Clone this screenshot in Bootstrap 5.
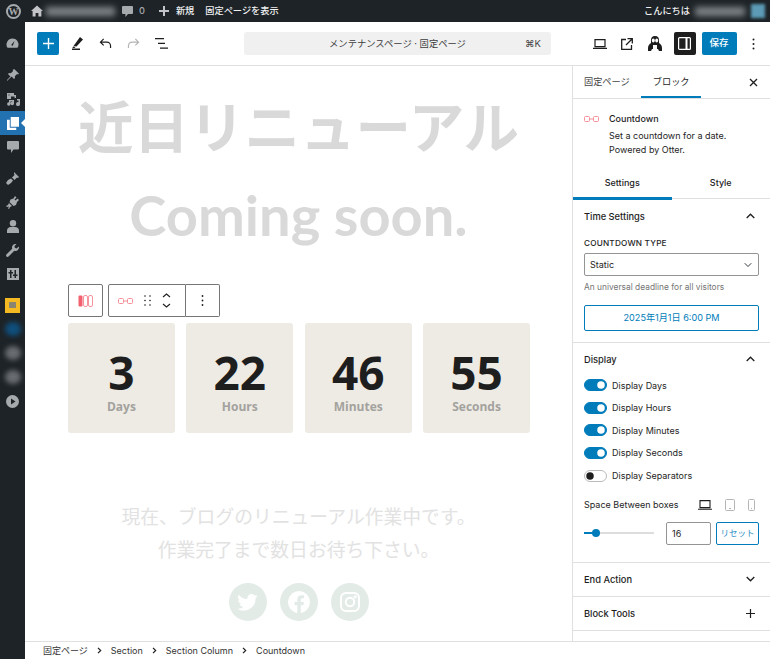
<!DOCTYPE html>
<html lang="ja">
<head>
    <meta charset="UTF-8">
    <title>Countdown</title>
    <link href="https://cdn.jsdelivr.net/npm/bootstrap@5.3.3/dist/css/bootstrap.min.css" rel="stylesheet">
    <script src="https://cdn.jsdelivr.net/npm/bootstrap@5.3.3/dist/js/bootstrap.bundle.min.js"></script>
    <meta name="viewport" content="width=device-width, initial-scale=1">
    <style>
        html, body { height: 100%; overflow: hidden; }
        body { font-family: Inter, "Noto Sans CJK JP", sans-serif; font-size: 9px; color: #1e1e1e; background: #fff; }
        svg { display: block; flex: none; }

        /* admin bar */
        .wp-adminbar { height: 22px; background: #1d2327; color: #f0f0f1; font-size: 9.2px; font-weight: 500; padding-left: 4px; flex: none; }
        .wp-logo { width: 15px; height: 15px; border: 2px solid #a7aaad; border-radius: 50%; color: #a7aaad; font: 700 10px/11px "Liberation Serif", serif; text-align: center; margin: 0 10px 0 2px; }
        .blur-name { height: 9px; background: #7f8488; filter: blur(3px); }
        .name-a { width: 69px; margin: 0 7px 0 3px; }
        .name-b { width: 50px; margin: 0 6px 0 5px; }
        .blur-avatar { width: 14px; height: 14px; background: #5c9ab5; filter: blur(1.5px); margin-right: 5px; }
        .bar-count { color: #a7aaad; margin: 0 14px 0 6px; }
        .bar-label { margin: 0 11px 0 7px; }

        /* wp menu */
        .wp-menu { width: 25px; background: #1d2327; padding-top: 9px; color: #a7aaad; flex: none; }
        .menu-row { height: 24px; position: relative; }
        .menu-row.is-current { background: #2271b1; color: #fff; }
        .menu-row.is-current::after { content: ""; position: absolute; right: 0; top: 8px; border: 4px solid transparent; border-right-color: #fff; }
        .menu-gap { margin-top: 8px; }
        .menu-gap-s { margin-top: 7px; }
        .plugin-tile { width: 15px; height: 15px; background: #f5b921; }
        .plugin-tile i { display: block; width: 7px; height: 6px; background: #8a8570; }
        .menu-blur { width: 16px; height: 14px; border-radius: 50%; filter: blur(2.5px); background: #696c70; }
        .menu-blur.tone-blue { background: #0f4f7d; }

        /* editor header */
        .editor-head { height: 44px; border-bottom: 1px solid #e0e0e0; padding-left: 12px; flex: none; }
        .editor-head > * { flex: none; }
        .inserter { width: 22px; height: 23px; background: #007cba; color: #fff; border-radius: 2px; }
        .tool-slot { width: 28px; }
        .cmd-bar { width: 307px; height: 23px; background: #f0f0f0; border-radius: 3px; color: #3c3c3c; font-size: 9.3px; margin-left: 69px; padding: 0 10px; position: relative; }
        .cmd-key { position: absolute; right: 10px; top: 5px; font-size: 9.5px; color: #444; }
        .right-tools { margin-left: 35px; }
        .view-slot { width: 27.5px; }
        .panel-toggle { width: 22px; height: 23px; background: #1e1e1e; color: #fff; border-radius: 2px; margin: 0 6px 0 5px; }
        .save-btn { width: 35px; height: 23px; background: #007cba; color: #fff; border-radius: 2px; font-size: 9.5px; font-weight: 500; }
        .kebab-slot { width: 34px; }

        /* canvas */
        .canvas-pane { width: 547px; flex: none; overflow: hidden; }
        .title-jp { font: 700 55.500px/1 "Noto Sans CJK JP", sans-serif; color: #d9d9d9; margin: 31px 0 0; text-align: center; }
        .title-en { font: 700 56px/1 Lato, sans-serif; color: #d9d9d9; margin: 34.500px 0 0; text-align: center; }
        .block-bar { height: 33px; margin: 41px 0 6px 43px; }
        .bar-box { height: 33px; border: 1px solid #757575; border-radius: 2px; background: #fff; }
        .box-one { width: 35px; margin-right: 5px; }
        .box-two { width: 78px; border-right: 1px solid #757575; padding-left: 9px; }
        .box-three { width: 34px; }
        .grip-slot { width: 29px; }
        .count-grid { margin: 0 42px 0 43px; gap: 11.5px; }
        .count-cell { flex: 1 1 0; height: 110px; background: #eeebe4; border-radius: 3px; text-align: center; font-family: "Open Sans", sans-serif; font-weight: 700; padding-top: 24px; }
        .count-num { font-size: 46px; line-height: 50px; color: #1e1e1e; }
        .count-lbl { font-size: 12px; line-height: 16px; color: #a3a29e; margin-top: 2px; }
        .notice-text { font: 400 18.800px/33px "Noto Sans CJK JP", sans-serif; color: #e2e2e2; text-align: center; margin: 66px 0 0; }
        .social-row { gap: 13px; margin-top: 18px; }
        .social-dot { width: 38px; height: 38px; border-radius: 50%; background: #e3ebe7; color: #fff; }

        /* settings sidebar */
        .side-pane { width: 198px; border-left: 1px solid #e0e0e0; flex: none; }
        .doc-tabs { height: 33px; border-bottom: 1px solid #e0e0e0; padding-left: 11px; position: relative; color: #444; font-size: 9.2px; }
        .doc-tab-on { position: relative; color: #1e1e1e; margin-left: 23px; }
        .doc-tab-on::after { content: ""; position: absolute; left: -12px; right: -11px; top: 21px; height: 2px; background: #007cba; }
        .close-x { position: absolute; right: 12px; top: 12px; }
        .block-card { height: 71px; padding: 13px 11px 0; gap: 10px; line-height: 14px; }
        .card-name { margin-bottom: 3px; font-weight: 500; }
        .sub-tabs { height: 29px; border-bottom: 1px solid #e0e0e0; font-weight: 500; }
        .sub-tab { width: 50%; text-align: center; height: 29px; line-height: 25px; position: relative; }
        .sub-tab.is-on::after { content: ""; position: absolute; left: 0; right: 0; bottom: -1px; height: 3px; background: #007cba; }
        .set-panel { border-bottom: 1px solid #e0e0e0; padding: 0 11px; }
        .set-head { height: 34px; font-weight: 500; font-size: 9.300px; padding-right: 4px; }
        .set-head.is-short { height: 31px; }
        .set-head span { position: relative; top: 1px; }
        .field-cap { font-size: 8.2px; font-weight: 500; letter-spacing: .2px; margin: 4px 0; line-height: 12px; }
        .form-select.tight { height: 23px; font-size: 9px; padding: 0 20px 0 5px; border-color: #949494; border-radius: 2px; background-size: 10px 8px; background-position: right 5px center; color: #1e1e1e; }
        .field-hint { color: #757575; font-size: 8.400px; margin: 5px 0 12px; line-height: 12px; }
        .btn.date-btn { display: block; width: 100%; height: 26px; padding: 0; font-size: 9.1px; border: 1px solid #007cba; border-radius: 2px; color: #007cba; background: #fff; margin-bottom: 11px; }
        .switch-row { height: 22.6px; gap: 5px; }
        .form-switch.tiny { padding: 0; margin: 0; min-height: 0; height: 12px; display: flex; }
        .form-switch.tiny .form-check-input { width: 23px; height: 12px; margin: 0; background-color: #007cba; border-color: #007cba; opacity: 1; }
        .form-switch.tiny .form-check-input:not(:checked) { background-color: #fff; border-color: #bbb; background-image: url("data:image/svg+xml,%3csvg xmlns='http://www.w3.org/2000/svg' viewBox='-4 -4 8 8'%3e%3ccircle r='3' fill='%231e1e1e'/%3e%3c/svg%3e"); }
        .space-head { margin-top: 6px; height: 24px; padding-right: 4px; }
        .device-set { gap: 13px; color: #1e1e1e; }
        .device-off { color: #b5b5b5; }
        .range-row { height: 23px; margin-top: 5px; margin-bottom: 17px; gap: 5px; }
        .range-track { width: 70px; height: 2px; background: #ddd; position: relative; margin-right: 7px; flex: none; }
        .range-fill { height: 2px; background: #007cba; }
        .range-knob { position: absolute; left: 8px; top: -3px; width: 8px; height: 8px; border-radius: 50%; background: #007cba; }
        .form-control.num-box { width: 45px; height: 23px; padding: 0 5px; font-size: 9px; border-color: #949494; border-radius: 2px; color: #1e1e1e; flex: none; }
        .btn.reset-btn { width: 43px; height: 23px; padding: 0; font-size: 8.5px; border: 1px solid #007cba; border-radius: 2px; color: #2c8fc7; background: #fff; flex: none; }
        .set-closed { height: 34px; font-weight: 500; font-size: 9.300px; padding-right: 15px; }

        /* footer */
        .crumbs { height: 18px; border-top: 1px solid #e0e0e0; padding-left: 18px; gap: 9px; color: #333; flex: none; background: #fff; }
    </style>
</head>
<body class="d-flex flex-column">

    <!-- admin bar -->
    <div class="wp-adminbar d-flex align-items-center">
        <div class="wp-logo">W</div>
        <svg width="12" height="12" viewBox="0 0 12 12" fill="#c3c4c7"><path d="M6 .5 0 6h1.600v5.500h3V8h2.800v3.500h3V6H12z"/></svg>
        <div class="blur-name name-a"></div>
        <svg width="11" height="11" viewBox="0 0 11 11" fill="#a7aaad"><path d="M1 0h9a1 1 0 0 1 1 1v6a1 1 0 0 1-1 1H6l-2.600 3V8H1a1 1 0 0 1-1-1V1a1 1 0 0 1 1-1z"/></svg>
        <span class="bar-count">0</span>
        <svg width="10" height="10" viewBox="0 0 10 10" fill="#c3c4c7"><path d="M4 0h2v4h4v2H6v4H4V6H0V4h4z"/></svg>
        <span class="bar-label">新規</span>
        <span>固定ページを表示</span>
        <span class="ms-auto">こんにちは</span>
        <div class="blur-name name-b"></div>
        <div class="blur-avatar"></div>
    </div>

    <div class="d-flex flex-grow-1 overflow-hidden">
        <!-- wp menu -->
        <nav class="wp-menu">
            <div class="menu-row d-flex align-items-center justify-content-center"><svg width="13" height="13" viewBox="0 0 13 13" fill="currentColor"><path d="M6.500 1.500a6 6 0 0 0-5 9.300h10a6 6 0 0 0-5-9.300zM6.900 8.600a1 1 0 0 1-1.400-1.200L8.600 4z"/></svg></div>
            <div class="menu-row menu-gap d-flex align-items-center justify-content-center"><svg width="12" height="12" viewBox="0 0 12 12" fill="currentColor"><path d="m7.200 0 4.800 4.800-1 .6-.9-.4-2.300 2.300.2 1.800-1 1-2.400-2.500L1 11l-1 1v-1l3.400-3.600L1 5l1-1 1.800.2L6.100 1.900 5.700 1z"/></svg></div>
            <div class="menu-row d-flex align-items-center justify-content-center"><svg width="14" height="13" viewBox="0 0 14 13" fill="currentColor"><path d="M1 0h7v2h2v3H8.500V3.500H5V6H1zM2.500 1.500v1h1v-1zM11 6h3v5a2 2 0 1 1-1.500-1.900V7.500H11zM3 7h5v3.500a1.700 1.700 0 1 1-1.500-1.700V8.500H4.500V11a1.700 1.700 0 1 1-1.500-1.700z"/></svg></div>
            <div class="menu-row is-current d-flex align-items-center justify-content-center"><svg width="12" height="13" viewBox="0 0 13 14" fill="currentColor"><path d="M4 0h9v10.500H4zM0 3h3v8.500h7V14H0z"/></svg></div>
            <div class="menu-row d-flex align-items-center justify-content-center"><svg width="12" height="12" viewBox="0 0 12 12" fill="currentColor"><path d="M1 0h10a1 1 0 0 1 1 1v6.500a1 1 0 0 1-1 1H6.500L4 12V8.500H1a1 1 0 0 1-1-1V1a1 1 0 0 1 1-1z"/></svg></div>
            <div class="menu-row menu-gap-s d-flex align-items-center justify-content-center"><svg width="13" height="13" viewBox="0 0 13 13" fill="currentColor"><path d="m8 0 5 5-1 1-1-.5-2.500 2.500-2.500-2.500L8.500 3 8 1.500zM5 6.500 7 8.500 5 11l-3 2-2-2 2-3z"/></svg></div>
            <div class="menu-row d-flex align-items-center justify-content-center"><svg width="13" height="13" viewBox="0 0 13 13" fill="currentColor"><path d="m9 0 1.500 1.500L8.500 3.500l1 1 2-2L13 4 11 6l-1 3-2.500 1L3.500 6l1-2.500 3-1zM3 7l3 3-2 1-1 2-1-.5 1-2-2 .5-1-1 2-1z"/></svg></div>
            <div class="menu-row d-flex align-items-center justify-content-center"><svg width="12" height="13" viewBox="0 0 12 13" fill="currentColor"><circle cx="6" cy="3.300" r="3.200"/><path d="M0 13v-2.500C0 8.500 2 7 3.500 7h5C10 7 12 8.500 12 10.500V13z"/></svg></div>
            <div class="menu-row d-flex align-items-center justify-content-center"><svg width="13" height="13" viewBox="0 0 13 13" fill="currentColor"><path d="M9.500 0a3.500 3.500 0 0 0-3.300 4.700L.4 10.500a1.500 1.500 0 0 0 2.100 2.100l5.800-5.800A3.500 3.500 0 0 0 12.800 2.500L10.500 4.500 8.800 3.800 8.500 2l2-1.800A3.500 3.500 0 0 0 9.500 0z"/></svg></div>
            <div class="menu-row d-flex align-items-center justify-content-center"><svg width="12" height="12" viewBox="0 0 12 12"><path fill="currentColor" d="M0 0h12v12H0z"/><path fill="#1d2327" d="M3 2h1.500v2H6v1.500H4.500V10H3V5.500H1.500V4H3zM7.500 2H9v4.500h1.500V8H9v2H7.500V8H6V6.500h1.500z"/></svg></div>
            <div class="menu-row menu-gap-s d-flex align-items-center justify-content-center"><div class="plugin-tile d-flex align-items-center justify-content-center"><i></i></div></div>
            <div class="menu-row d-flex align-items-center justify-content-center"><div class="menu-blur tone-blue"></div></div>
            <div class="menu-row d-flex align-items-center justify-content-center"><div class="menu-blur"></div></div>
            <div class="menu-row d-flex align-items-center justify-content-center"><div class="menu-blur"></div></div>
            <div class="menu-row d-flex align-items-center justify-content-center"><svg width="13" height="13" viewBox="0 0 13 13"><circle cx="6.500" cy="6.500" r="6.500" fill="currentColor"/><path fill="#1d2327" d="M5 3.500 9.500 6.500 5 9.500z"/></svg></div>
        </nav>

        <div class="d-flex flex-column flex-grow-1 overflow-hidden">
            <!-- editor header -->
            <header class="editor-head d-flex align-items-center">
                <div class="inserter d-flex align-items-center justify-content-center"><svg width="11" height="11" viewBox="0 0 11 11" fill="currentColor"><path d="M4.800 0h1.400v4.800H11v1.400H6.200V11H4.800V6.200H0V4.800h4.800z"/></svg></div>
                <div class="tool-slot d-flex justify-content-center ms-1"><svg width="12" height="13" viewBox="0 0 12 13" fill="#1e1e1e"><path d="M9 0l3 2.500-6.500 7-3-.6zM1 11.500h8V13H1zM2 9.500l2.500.6-1 .9H1.500z"/></svg></div>
                <div class="tool-slot d-flex justify-content-center"><svg width="13" height="11" viewBox="0 0 14 12" fill="none" stroke="#1e1e1e" stroke-width="1.300"><path d="M5 1 1.500 4.500 5 8M2 4.500h6.500A4 4 0 0 1 12.500 8.500V11"/></svg></div>
                <div class="tool-slot d-flex justify-content-center"><svg width="13" height="11" viewBox="0 0 14 12" fill="none" stroke="#b4b4b4" stroke-width="1.300"><path d="M9 1l3.500 3.500L9 8M12 4.500H5.500A4 4 0 0 0 1.500 8.500V11"/></svg></div>
                <div class="tool-slot d-flex justify-content-center"><svg width="13" height="11" viewBox="0 0 13 11" fill="#1e1e1e"><path d="M0 0h9v1.300H0zM3 4.800h7v1.300H3zM5 9.500h8v1.300H5z"/></svg></div>
                <div class="cmd-bar d-flex align-items-center justify-content-center">
                    <span>メンテナンスページ · 固定ページ</span>
                    <span class="cmd-key">⌘K</span>
                </div>
                <div class="right-tools d-flex align-items-center">
                    <div class="view-slot d-flex justify-content-center"><svg width="14" height="10" viewBox="0 0 14 10" fill="none" stroke="#1e1e1e" stroke-width="1.200"><path d="M2 .6h10v7H2zM0 9.300h14"/></svg></div>
                    <div class="view-slot d-flex justify-content-center"><svg width="12" height="12" viewBox="0 0 12 12" fill="none" stroke="#1e1e1e" stroke-width="1.300"><path d="M5 1.500H.7v9.800h9.800V7M6.500.7h4.800v4.800M11 1 5 7"/></svg></div>
                    <div class="view-slot d-flex justify-content-center"><svg width="14" height="16" viewBox="0 0 14 16"><path fill="#1e1e1e" d="M7 0c3 0 4 2 4 4v3c2 1 3 3 3 5v3h-3l-1-2H4l-1 2H0v-3c0-2 1-4 3-5V4c0-2 1-4 4-4z"/><ellipse cx="5.300" cy="4.500" rx="1.500" ry="2" fill="#fff"/><ellipse cx="8.700" cy="4.500" rx="1.500" ry="2" fill="#fff"/><path fill="#fff" d="M5 9h4v4H5z"/></svg></div>
                    <button class="panel-toggle btn p-0 d-flex align-items-center justify-content-center border-0"><svg width="13" height="13" viewBox="0 0 13 13" fill="none" stroke="#fff" stroke-width="1.200"><rect x=".6" y=".6" width="11.800" height="11.800" rx="1"/><path d="M8.500 .6v11.800" stroke-width="2"/></svg></button>
                    <button class="save-btn btn p-0 border-0">保存</button>
                    <div class="kebab-slot d-flex justify-content-center"><svg width="3" height="12" viewBox="0 0 3 12" fill="#1e1e1e"><circle cx="1.500" cy="1.500" r="1"/><circle cx="1.500" cy="6" r="1"/><circle cx="1.500" cy="10.500" r="1"/></svg></div>
                </div>
            </header>

            <div class="d-flex flex-grow-1 overflow-hidden">
                <!-- canvas -->
                <main class="canvas-pane">
                    <h1 class="title-jp">近日リニューアル</h1>
                    <h2 class="title-en">Coming soon.</h2>

                    <div class="block-bar d-flex">
                        <div class="bar-box box-one d-flex align-items-center justify-content-center">
                            <svg width="15" height="12" viewBox="0 0 15 12"><rect x=".5" y=".5" width="4" height="11" rx="1" fill="#f2616f"/><rect x="5.500" y=".5" width="4" height="11" rx="1.500" fill="none" stroke="#f7939c"/><rect x="10.500" y=".5" width="4" height="11" rx="1.500" fill="none" stroke="#f7939c"/></svg>
                        </div>
                        <div class="bar-box box-two d-flex align-items-center rounded-end-0">
                            <svg width="15" height="6" viewBox="0 0 15 6" fill="none" stroke="#f58f99"><rect x=".5" y=".5" width="5" height="5" rx="1"/><rect x="9.500" y=".5" width="5" height="5" rx="1"/><path d="M5.500 3h4"/></svg>
                            <div class="grip-slot d-flex justify-content-center"><svg width="7" height="11" viewBox="0 0 7 11" fill="#1e1e1e"><circle cx="1" cy="1" r=".8"/><circle cx="6" cy="1" r=".8"/><circle cx="1" cy="5.500" r=".8"/><circle cx="6" cy="5.500" r=".8"/><circle cx="1" cy="10" r=".8"/><circle cx="6" cy="10" r=".8"/></svg></div>
                            <svg width="9" height="15" viewBox="0 0 9 15" fill="none" stroke="#1e1e1e" stroke-width="1.100"><path d="m1 4 3.500-3L8 4M1 11l3.500 3L8 11"/></svg>
                        </div>
                        <div class="bar-box box-three border-start-0 rounded-start-0 d-flex align-items-center justify-content-center">
                            <svg width="3" height="11" viewBox="0 0 3 11" fill="#1e1e1e"><circle cx="1.500" cy="1" r=".9"/><circle cx="1.500" cy="5.500" r=".9"/><circle cx="1.500" cy="10" r=".9"/></svg>
                        </div>
                    </div>

                    <div class="count-grid d-flex">
                        <div class="count-cell"><div class="count-num">3</div><div class="count-lbl">Days</div></div>
                        <div class="count-cell"><div class="count-num">22</div><div class="count-lbl">Hours</div></div>
                        <div class="count-cell"><div class="count-num">46</div><div class="count-lbl">Minutes</div></div>
                        <div class="count-cell"><div class="count-num">55</div><div class="count-lbl">Seconds</div></div>
                    </div>

                    <p class="notice-text">現在、ブログのリニューアル作業中です。<br>作業完了まで数日お待ち下さい。</p>

                    <div class="social-row d-flex justify-content-center">
                        <div class="social-dot d-flex align-items-center justify-content-center">
                            <svg width="21" height="17" viewBox="0 0 24 20" fill="currentColor"><path d="M24 2.400c-.9.400-1.800.7-2.800.8 1-.6 1.800-1.500 2.200-2.700-1 .6-2 1-3.100 1.200A4.900 4.900 0 0 0 11.900 6.200 14 14 0 0 1 1.700.9a4.900 4.900 0 0 0 1.500 6.600c-.8 0-1.600-.2-2.200-.6 0 2.400 1.700 4.400 3.900 4.900-.7.200-1.500.2-2.200.1.600 2 2.400 3.400 4.600 3.400A9.900 9.900 0 0 1 0 17.300 14 14 0 0 0 21.500 4.900c1-.7 1.800-1.500 2.500-2.500z"/></svg>
                        </div>
                        <div class="social-dot d-flex align-items-center justify-content-center">
                            <svg width="22" height="22" viewBox="0 0 22 22" fill="currentColor"><path d="M22 11a11 11 0 1 0-12.700 10.900v-7.700H6.500V11h2.800V8.600c0-2.800 1.600-4.300 4.200-4.300 1.200 0 2.500.2 2.500.2v2.700H14.600c-1.400 0-1.800.9-1.800 1.700V11h3.100l-.5 3.200h-2.600v7.700A11 11 0 0 0 22 11z"/></svg>
                        </div>
                        <div class="social-dot d-flex align-items-center justify-content-center">
                            <svg width="20" height="20" viewBox="0 0 20 20" fill="none" stroke="currentColor" stroke-width="2"><rect x="1" y="1" width="18" height="18" rx="5"/><circle cx="10" cy="10" r="4.200"/><circle cx="15.200" cy="4.800" r=".6" fill="currentColor"/></svg>
                        </div>
                    </div>
                </main>

                <!-- settings sidebar -->
                <aside class="side-pane">
                    <div class="doc-tabs d-flex align-items-center">
                        <span>固定ページ</span>
                        <span class="doc-tab-on">ブロック</span>
                        <svg class="close-x" width="9" height="9" viewBox="0 0 9 9" stroke="#1e1e1e" stroke-width="1.300"><path d="m1 1 7 7M8 1 1 8"/></svg>
                    </div>
                    <div class="block-card d-flex">
                        <svg class="mt-1" width="15" height="6" viewBox="0 0 15 6" fill="none" stroke="#f58f99"><rect x=".5" y=".5" width="5" height="5" rx="1"/><rect x="9.500" y=".5" width="5" height="5" rx="1"/><path d="M5.500 3h4"/></svg>
                        <div>
                            <div class="card-name">Countdown</div>
                            <div>Set a countdown for a date.<br>Powered by Otter.</div>
                        </div>
                    </div>
                    <div class="sub-tabs d-flex">
                        <div class="sub-tab is-on">Settings</div>
                        <div class="sub-tab">Style</div>
                    </div>

                    <section class="set-panel">
                        <div class="set-head d-flex align-items-center justify-content-between">
                            <span>Time Settings</span>
                            <svg width="9" height="6" viewBox="0 0 9 6" fill="none" stroke="#1e1e1e" stroke-width="1.300"><path d="m.7 5 3.800-3.800L8.300 5"/></svg>
                        </div>
                        <div class="field-cap">COUNTDOWN TYPE</div>
                        <select class="form-select tight"><option>Static</option></select>
                        <div class="field-hint">An universal deadline for all visitors</div>
                        <button class="btn date-btn">2025年1月1日 6:00 PM</button>
                    </section>

                    <section class="set-panel">
                        <div class="set-head is-short d-flex align-items-center justify-content-between">
                            <span>Display</span>
                            <svg width="9" height="6" viewBox="0 0 9 6" fill="none" stroke="#1e1e1e" stroke-width="1.300"><path d="m.7 5 3.800-3.800L8.300 5"/></svg>
                        </div>
                        <div class="switch-row d-flex align-items-center"><div class="form-check form-switch tiny"><input class="form-check-input" type="checkbox" checked></div><span>Display Days</span></div>
                        <div class="switch-row d-flex align-items-center"><div class="form-check form-switch tiny"><input class="form-check-input" type="checkbox" checked></div><span>Display Hours</span></div>
                        <div class="switch-row d-flex align-items-center"><div class="form-check form-switch tiny"><input class="form-check-input" type="checkbox" checked></div><span>Display Minutes</span></div>
                        <div class="switch-row d-flex align-items-center"><div class="form-check form-switch tiny"><input class="form-check-input" type="checkbox" checked></div><span>Display Seconds</span></div>
                        <div class="switch-row d-flex align-items-center"><div class="form-check form-switch tiny"><input class="form-check-input" type="checkbox"></div><span>Display Separators</span></div>

                        <div class="space-head d-flex align-items-center justify-content-between">
                            <span>Space Between boxes</span>
                            <div class="device-set d-flex align-items-center">
                                <svg width="14" height="10" viewBox="0 0 14 10" fill="none" stroke="currentColor" stroke-width="1.100"><path d="M2 .6h10v7H2zM0 9.300h14"/></svg>
                                <svg class="device-off" width="10" height="12" viewBox="0 0 10 12" fill="none" stroke="currentColor"><rect x=".5" y=".5" width="9" height="11" rx="1"/><path d="M4 9.500h2"/></svg>
                                <svg class="device-off" width="7" height="12" viewBox="0 0 7 12" fill="none" stroke="currentColor"><rect x=".5" y=".5" width="6" height="11" rx="1"/><path d="M3 9.500h1"/></svg>
                            </div>
                        </div>
                        <div class="range-row d-flex align-items-center">
                            <div class="range-track"><div class="range-fill" style="width:16%"></div><div class="range-knob"></div></div>
                            <input class="form-control num-box" type="text" value="16">
                            <button class="btn reset-btn">リセット</button>
                        </div>
                    </section>

                    <section class="set-panel set-closed d-flex align-items-center justify-content-between">
                        <span>End Action</span>
                        <svg width="9" height="6" viewBox="0 0 9 6" fill="none" stroke="#1e1e1e" stroke-width="1.300"><path d="m.7 1 3.800 3.800L8.300 1"/></svg>
                    </section>
                    <section class="set-panel set-closed d-flex align-items-center justify-content-between">
                        <span>Block Tools</span>
                        <svg width="9" height="9" viewBox="0 0 9 9" fill="#1e1e1e"><path d="M3.900 0h1.200v3.900H9v1.200H5.100V9H3.900V5.100H0V3.900h3.900z"/></svg>
                    </section>
                </aside>
            </div>

            <!-- breadcrumb -->
            <footer class="crumbs d-flex align-items-center">
                <span>固定ページ</span>
                <svg width="5" height="7" viewBox="0 0 5 7" fill="none" stroke="#1e1e1e" stroke-width="1.200"><path d="m1 .8 2.700 2.700L1 6.200"/></svg>
                <span>Section</span>
                <svg width="5" height="7" viewBox="0 0 5 7" fill="none" stroke="#1e1e1e" stroke-width="1.200"><path d="m1 .8 2.700 2.700L1 6.200"/></svg>
                <span>Section Column</span>
                <svg width="5" height="7" viewBox="0 0 5 7" fill="none" stroke="#1e1e1e" stroke-width="1.200"><path d="m1 .8 2.700 2.700L1 6.200"/></svg>
                <span>Countdown</span>
            </footer>
        </div>
    </div>

</body>
</html>
